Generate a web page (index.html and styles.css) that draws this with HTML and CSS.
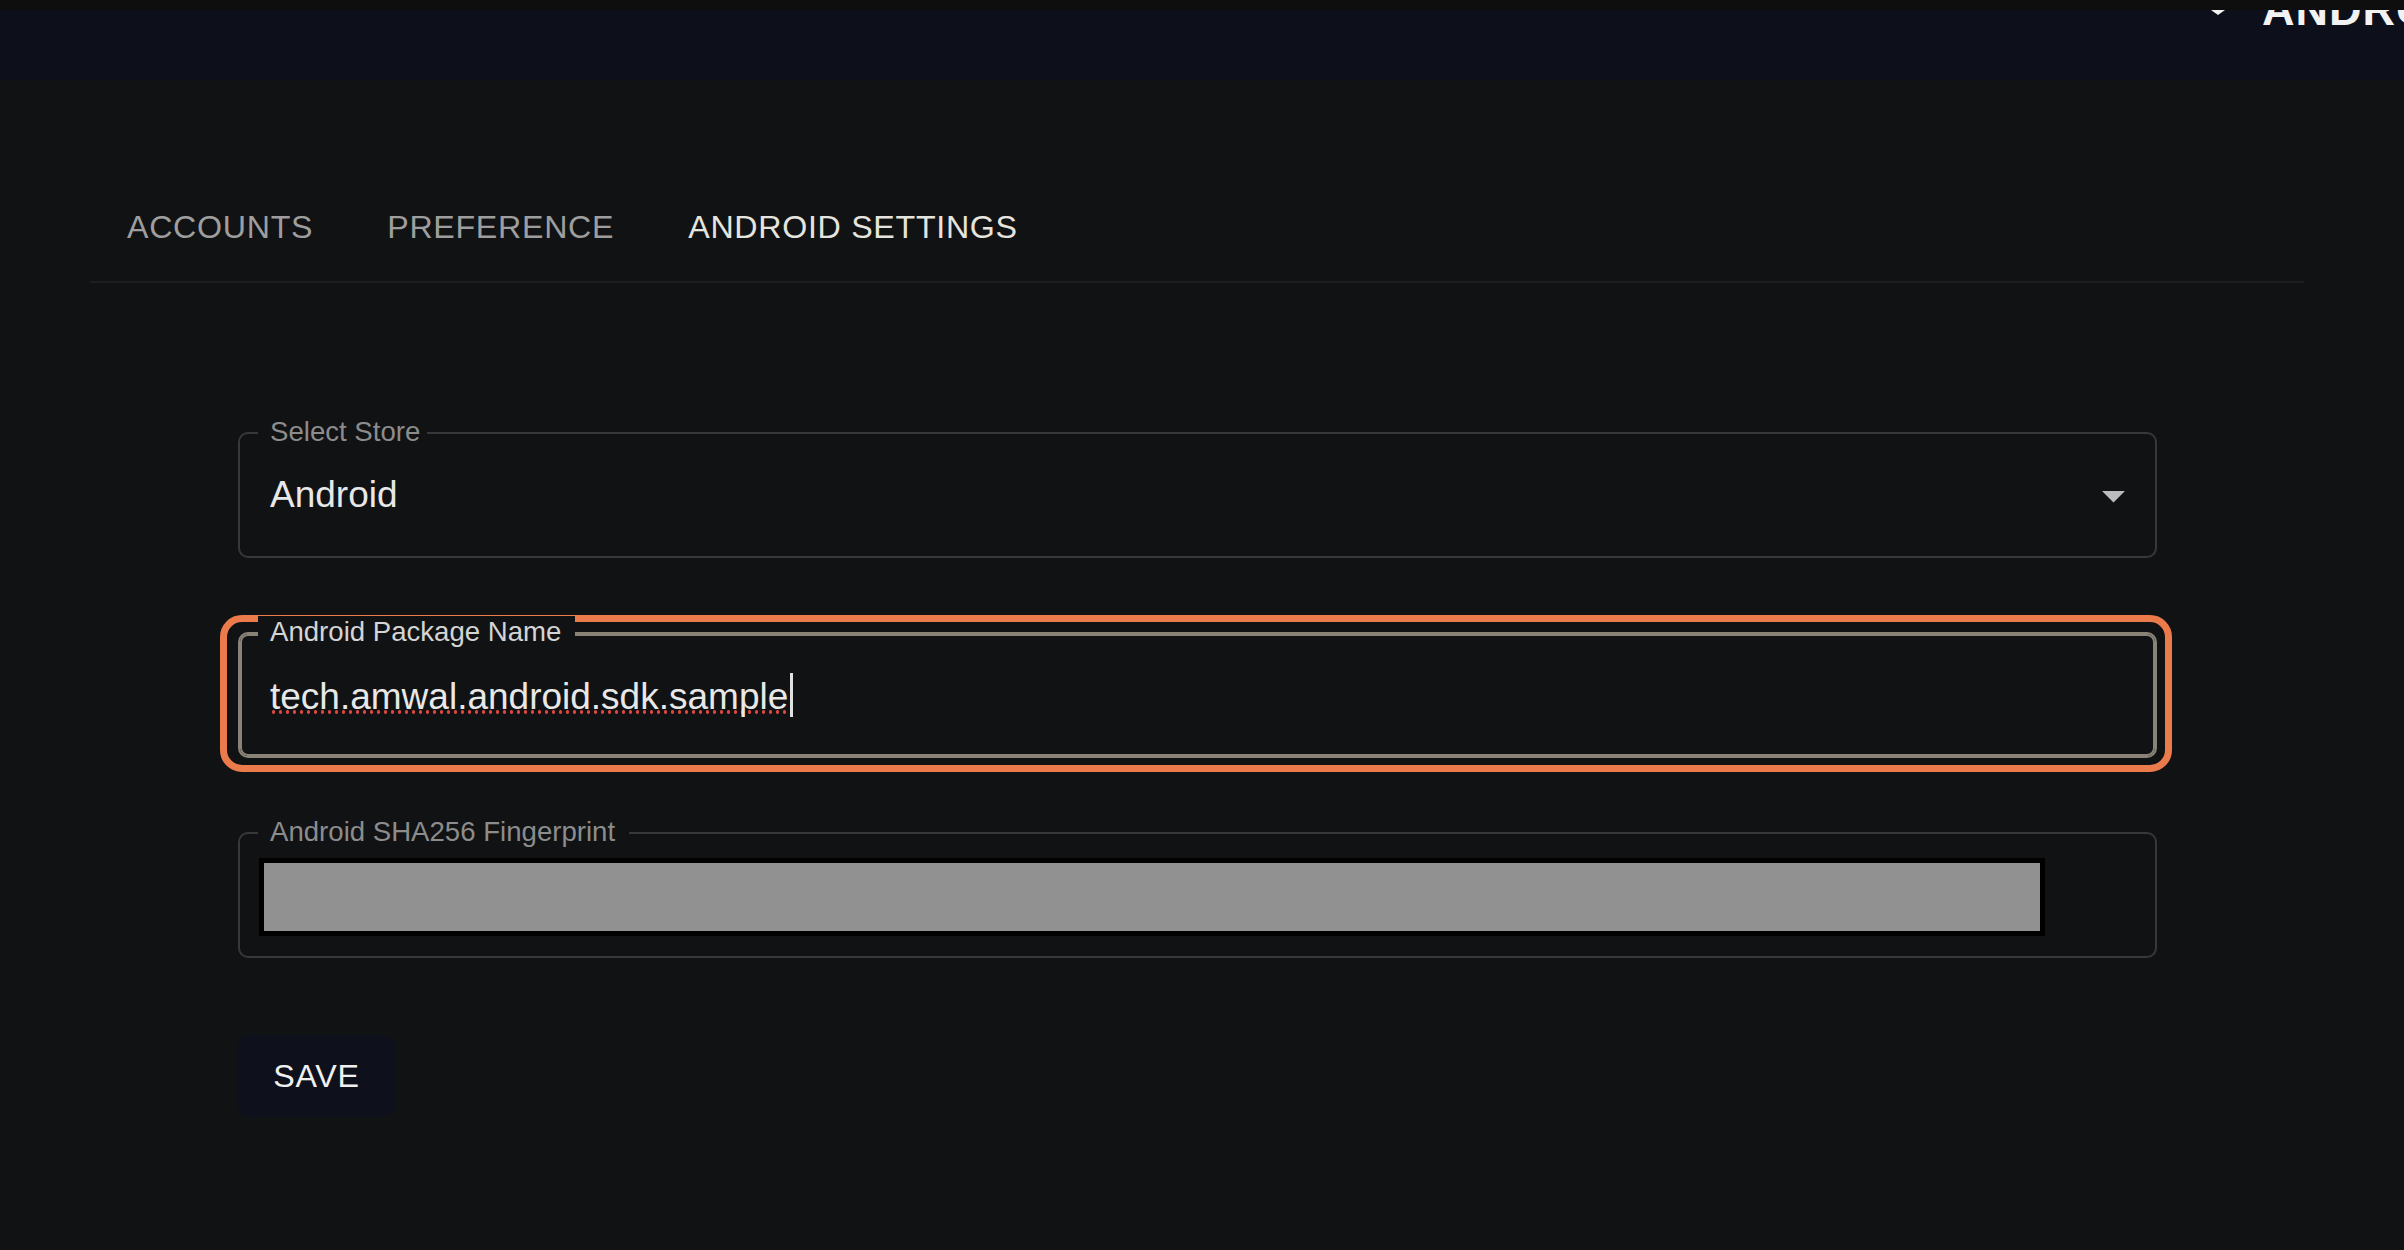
FILE: index.html
```html
<!DOCTYPE html>
<html lang="en">
<head>
<meta charset="utf-8">
<title>Android Settings</title>
<link rel="stylesheet" href="styles.css">
</head>
<body>
<div class="topstrip"></div>
<header class="appbar">
  <div class="appbar-spacer"></div>
  <div class="appbar-user">
    <svg class="appbar-caret" width="14" height="5" viewBox="0 0 14 5"><path d="M0 0h14L7 5z" fill="#f2f2f2"/></svg>
    <span class="appbar-title">ANDROID</span>
  </div>
</header>
<main class="page">
  <nav class="tabs">
    <button class="tab">ACCOUNTS</button>
    <button class="tab">PREFERENCE</button>
    <button class="tab tab-active">ANDROID SETTINGS</button>
  </nav>
  <form class="form">
    <div class="field field-select">
      <span class="field-label">Select Store</span>
      <span class="field-value">Android</span>
      <svg class="select-arrow" width="55" height="55" viewBox="0 0 24 24"><path d="M7 10l5 5 5-5z" fill="#bdbdbd"/></svg>
    </div>
    <div class="field field-focused">
      <span class="highlight"></span>
      <span class="field-label field-label-focused">Android Package Name</span>
      <span class="field-value"><span class="spell">tech.amwal.android.sdk.sample</span><span class="text-caret"></span></span>
    </div>
    <div class="field field-redacted">
      <span class="field-label field-label-wide">Android SHA256 Fingerprint</span>
      <div class="redaction"></div>
    </div>
    <button type="button" class="save">SAVE</button>
  </form>
</main>
</body>
</html>
```

FILE: styles.css
```css
html, body {
  margin: 0;
  padding: 0;
}

body {
  background: #111214;
  font-family: "Liberation Sans", Arial, Helvetica, sans-serif;
  overflow: hidden;
  height: 1250px;
}

.topstrip {
  height: 10px;
  background: #0e0e0e;
}

.appbar {
  height: 70px;
  background: #0d101a;
  display: flex;
  align-items: flex-start;
  overflow: hidden;
}

.appbar-spacer {
  flex: 1;
}

.appbar-user {
  width: 193px;
  flex: none;
  display: flex;
  align-items: flex-start;
  gap: 37px;
  overflow: hidden;
  white-space: nowrap;
}

.appbar-caret {
  flex: none;
  display: block;
}

.appbar-title {
  font-size: 45px;
  line-height: 45px;
  font-weight: bold;
  color: #f2f2f2;
  margin-top: -23px;
  letter-spacing: 1px;
}

.page {
  padding: 0 100px 0 90px;
}

.tabs {
  margin-top: 93px;
  display: flex;
  border-bottom: 2px solid #1d1e21;
}

.tab {
  height: 108px;
  padding: 0 37px;
  border: none;
  background: none;
  font-family: inherit;
  font-size: 32.2px;
  letter-spacing: 0.7px;
  color: #9e9e9e;
  cursor: pointer;
}

.tab-active {
  color: #e6e4de;
}

.form {
  margin: 149px 0 0 148px;
  width: 1919px;
  display: flex;
  flex-direction: column;
  gap: 74px;
}

.field {
  position: relative;
  box-sizing: border-box;
  height: 126px;
  border: 2px solid #37383b;
  border-radius: 10px;
  display: flex;
  align-items: center;
  padding: 0 14px 0 30px;
}

.field-label {
  position: absolute;
  left: 18px;
  top: -18px;
  line-height: 32px;
  padding: 0 7px 0 12px;
  background: #111214;
  font-size: 27.6px;
  color: #8c8c8c;
  white-space: nowrap;
}

.field-label-focused {
  color: #d4d4d4;
  padding-right: 14px;
}

.field-label-wide {
  padding-right: 14px;
}

.field-value {
  flex: 1;
  font-size: 37px;
  color: #e8e8e8;
  white-space: nowrap;
}

.select-arrow {
  flex: none;
  display: block;
}

.field-focused {
  border-color: #898377;
  box-shadow: inset 0 0 0 2px #898377;
}

.highlight {
  position: absolute;
  left: -20px;
  right: -17px;
  top: -19px;
  bottom: -16px;
  box-sizing: border-box;
  border: 7px solid #ec7b4b;
  border-radius: 22px;
  pointer-events: none;
}

.spell {
  background-image: radial-gradient(circle at 50% 50%, #dc443e 1.6px, transparent 2px);
  background-size: 7px 6px;
  background-repeat: repeat-x;
  background-position: 0 calc(100% - 2px);
}

.text-caret {
  display: inline-block;
  width: 3px;
  height: 44px;
  background: #e0e0e0;
  vertical-align: -8px;
  margin-left: 2px;
}

.field-redacted {
  align-items: flex-start;
  padding: 24px 0 0 19px;
}

.redaction {
  box-sizing: border-box;
  width: 1786px;
  height: 78px;
  border: 5px solid #000;
  background: #919191;
}

.save {
  align-self: flex-start;
  margin-top: 3px;
  width: 157px;
  height: 82px;
  border: none;
  border-radius: 10px;
  background: #0e111b;
  color: #f0f0f0;
  font-family: inherit;
  font-size: 32.2px;
  font-weight: 500;
  letter-spacing: 0.8px;
  cursor: pointer;
}
```
